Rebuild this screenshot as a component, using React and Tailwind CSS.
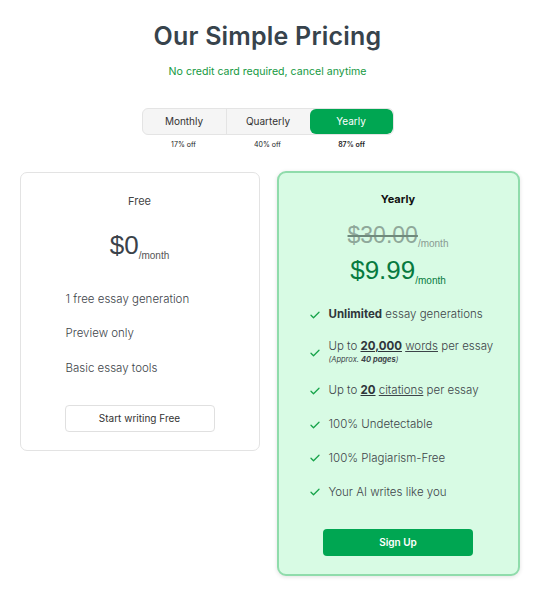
import React, { useState } from 'react';

const Check = () => (
  <svg width="12" height="12" viewBox="0 0 24 24" fill="none" stroke="#16a34a" strokeWidth="2.6" strokeLinecap="round" strokeLinejoin="round" className="shrink-0">
    <path d="M4 12.5l5 5L20 6.5" />
  </svg>
);

const tabs = [
  { name: 'Monthly', off: '17% off' },
  { name: 'Quarterly', off: '40% off' },
  { name: 'Yearly', off: '87% off' },
];

const App = () => {
  const [active, setActive] = useState('Yearly');

  return (
    <div className="min-h-screen bg-white flex flex-col items-center pt-[20px] text-[#3a424a]" style={{ fontFamily: 'Inter, "Noto Sans", sans-serif' }}>
      <h1 className="text-[25px] font-semibold leading-[32px] tracking-[0.2px] text-[#37434c]">Our Simple Pricing</h1>
      <p className="mt-[13px] text-[10.6px] leading-[14px] text-[#15993f]">No credit card required, cancel anytime</p>

      <div className="mt-[29px] flex w-[252px] h-[27px] rounded-[6px] border border-[#e4e4e4] bg-[#f5f5f5] overflow-hidden">
        {tabs.map((t, i) => (
          <button
            key={t.name}
            onClick={() => setActive(t.name)}
            className={
              active === t.name
                ? 'flex-1 text-[10px] text-white bg-[#00a652] rounded-[6px]'
                : i === 0
                ? 'flex-1 text-[10px] text-[#333] border-r border-[#e4e4e4]'
                : 'flex-1 text-[10px] text-[#333]'
            }
          >
            {t.name}
          </button>
        ))}
      </div>
      <div className="flex w-[252px] mt-[5px]">
        {tabs.map((t) => (
          <span key={t.off} className={t.name === 'Yearly' ? 'flex-1 text-center text-[7px] font-semibold text-[#222]' : 'flex-1 text-center text-[7px] text-[#222]'}>
            {t.off}
          </span>
        ))}
      </div>

      <div className="mt-[21px] ml-[4px] flex items-start gap-[17px]">
        {/* free plan */}
        <div className="w-[240px] h-[279px] border border-[#e3e3e3] rounded-[7px] bg-white flex flex-col items-center pt-[20px]">
          <p className="text-[11px] text-[#444]">Free</p>
          <div className="mt-[21px] flex items-end" style={{ fontFamily: '"Liberation Sans", Arial, sans-serif' }}>
            <span className="text-[26px] leading-[30px] text-[#3a424a]">$0</span>
            <span className="text-[10px] text-[#555] mb-[-3px]">/month</span>
          </div>
          <ul className="self-start ml-[45px] mt-[31px] flex flex-col gap-[17px] text-[11.5px] font-light text-[#3d4449]">
            <li>1 free essay generation</li>
            <li>Preview only</li>
            <li>Basic essay tools</li>
          </ul>
          <button className="mt-[28px] w-[150px] h-[27px] border border-[#e0e0e0] rounded-[4px] text-[10px] text-[#333] bg-white">
            Start writing Free
          </button>
        </div>

        {/* yearly plan */}
        <div className="w-[243px] h-[405px] border-2 border-[#8fdcab] rounded-[9px] bg-[#d8fbe4] shadow-[0_1px_4px_rgba(0,0,0,0.12)] flex flex-col items-center pt-[18px] mt-[-1px]">
          <p className="text-[11px] font-bold text-[#111]">Yearly</p>
          <div className="mt-[15px] flex items-end" style={{ fontFamily: '"Liberation Sans", Arial, sans-serif' }}>
            <span className="text-[23px] leading-[26px] text-[#8fa89a] line-through decoration-[#6f8a7c]">$30.00</span>
            <span className="text-[10px] text-[#8a9a92] mb-[-3px]">/month</span>
          </div>
          <div className="mt-[7px] flex items-end" style={{ fontFamily: '"Liberation Sans", Arial, sans-serif' }}>
            <span className="text-[26px] leading-[30px] text-[#077a3f]">$9.99</span>
            <span className="text-[10px] text-[#077a3f] mb-[-3px]">/month</span>
          </div>

          <ul className="self-start ml-[30px] mt-[21px] flex flex-col gap-[16.5px] text-[11.5px] font-light text-[#3d4449]">
            <li className="flex items-center gap-[8px]">
              <Check />
              <span><b className="font-bold text-[#2f363b]">Unlimited</b> essay generations</span>
            </li>
            <li className="flex items-center gap-[8px]">
              <Check />
              <span className="flex flex-col leading-[13px]">
                <span>Up to <b className="font-bold underline text-[#2f363b]">20,000</b> <span className="underline">words</span> per essay</span>
                <span className="text-[7.5px] italic font-normal">(Approx. <b className="font-bold">40 pages</b>)</span>
              </span>
            </li>
            <li className="flex items-center gap-[8px]">
              <Check />
              <span>Up to <b className="font-bold underline text-[#2f363b]">20</b> <span className="underline">citations</span> per essay</span>
            </li>
            <li className="flex items-center gap-[8px]">
              <Check />
              <span>100% Undetectable</span>
            </li>
            <li className="flex items-center gap-[8px]">
              <Check />
              <span>100% Plagiarism-Free</span>
            </li>
            <li className="flex items-center gap-[8px]">
              <Check />
              <span>Your AI writes like you</span>
            </li>
          </ul>

          <button className="mt-[28px] w-[150px] h-[27px] rounded-[4px] bg-[#00a652] text-white text-[10px] font-semibold">
            Sign Up
          </button>
        </div>
      </div>
    </div>
  );
};

export default App;
